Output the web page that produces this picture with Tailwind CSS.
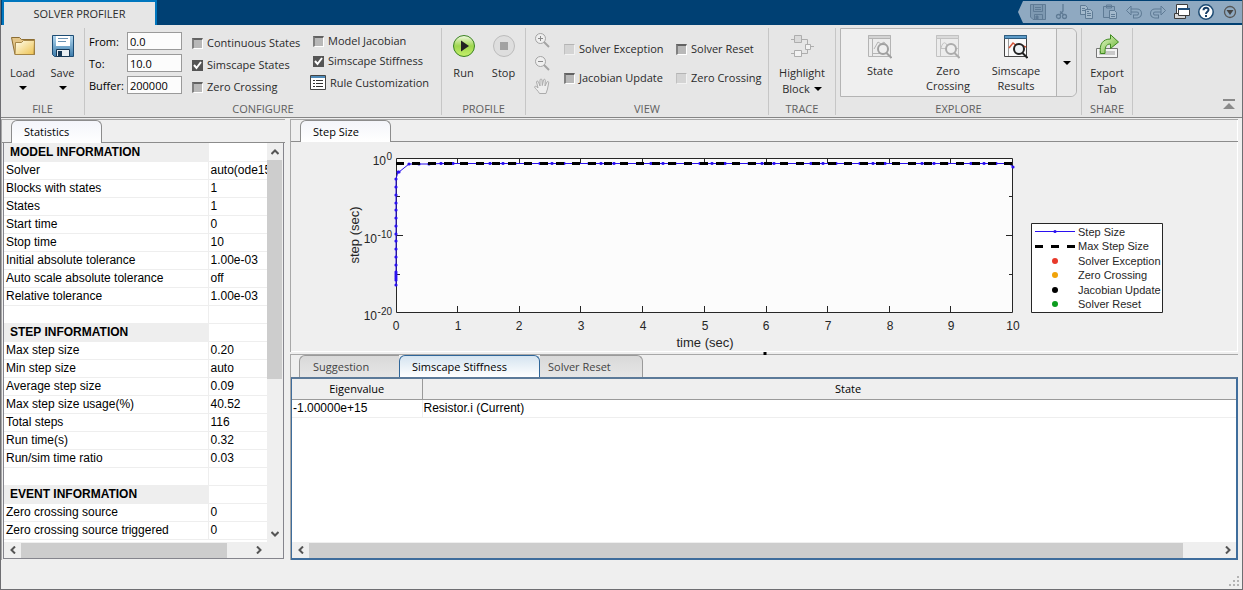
<!DOCTYPE html>
<html lang="en">

<head>
  <meta charset="UTF-8">
  <meta name="viewport" content="width=device-width, initial-scale=1.0">
  <title>Solver Profiler</title>
  <script src="https://cdn.jsdelivr.net/npm/@tailwindcss/browser@4"></script>
</head>

<body class="h-screen overflow-hidden flex flex-col bg-[#efefef] border-x border-b border-[#6e6e72] font-['Open_Sans',sans-serif] text-[11px] leading-4 text-[#2b2b2b]">

  <!-- Title bar -->
  <header class="flex-none h-[25px] flex justify-between bg-[#004073]">
    <h1 class="w-[155px] h-[25px] ml-px pt-1 text-center bg-[#e6e6e6] border-t-2 border-x-2 border-[#0076be]">SOLVER PROFILER</h1>

    <!-- Quick access -->
    <nav class="h-[22px] mt-px w-[224px] pl-3 flex items-center gap-2 bg-[#8fa9c1] [clip-path:polygon(5px_0,100%_0,100%_100%,5px_100%,0_50%)]">
      <button class="w-4" aria-label="Save"><svg viewBox="0 0 16 16" fill="none" stroke="#5f7b95"><path fill="#7e99b1" d="M.5.5h15v15H3L.5 13z"/><path d="M3.500.5h9v7h-9zM5 3.500h6M5 5.500h6M4.500 15.500v-5h8v5"/><path fill="#5f7b95" d="M6 12h2v3H6z"/></svg></button>
      <button class="w-4" aria-label="Cut"><svg viewBox="0 0 16 16" fill="none" stroke="#5f7b95" stroke-width="1.300"><path d="M9 0v7L5.500 11M6 7.500l4 3.500"/><circle cx="4.500" cy="12.500" r="2"/><circle cx="10.500" cy="12.500" r="2"/></svg></button>
      <button class="w-4" aria-label="Copy"><svg viewBox="0 0 16 16" fill="#a3b9cc" stroke="#5f7b95"><path d="M2.500 1.500h5l2 2v7h-7zM4 4.500h3M4 6.500h4"/><path d="M7.500 5.500h5l2 2v7h-7zM9 9.500h4M9 11.500h4M9 7.500h2"/></svg></button>
      <button class="w-4" aria-label="Paste"><svg viewBox="0 0 16 16" fill="#8ba5bd" stroke="#5f7b95"><path d="M1.500 2.500h11v11h-11zM4.500 1h5v3h-5z"/><path fill="#a3b9cc" d="M7.500 6.500h5l2 2v6h-7zM9 10.500h4M9 12.500h4"/></svg></button>
      <button class="w-4" aria-label="Undo"><svg viewBox="0 0 16 16" fill="none"><path stroke="#5f7b95" stroke-width="4" d="M4 6.500h7a3 3 0 0 1 0 6H7"/><path stroke="#91abc2" stroke-width="2" d="M4 6.500h7a3 3 0 0 1 0 6H8"/><path fill="#91abc2" stroke="#5f7b95" d="M5 2v9L.5 6.500z"/></svg></button>
      <button class="w-4" aria-label="Redo"><svg viewBox="0 0 16 16" fill="none"><path stroke="#5f7b95" stroke-width="4" d="M12 6.500H5a3 3 0 0 0 0 6h4"/><path stroke="#91abc2" stroke-width="2" d="M12 6.500H5a3 3 0 0 0 0 6h3"/><path fill="#91abc2" stroke="#5f7b95" d="M11 2v9l4.500-4.500z"/></svg></button>
      <button class="w-4" aria-label="Windows"><svg viewBox="0 0 16 16" fill="#fff" stroke="#3c3c3c"><path d="M2.500.5h11v9h-11z"/><path fill="#d8d8d8" d="M.5 9.500h11v5H.5z"/><path d="M4.500 4.500h11v7h-11z"/><path stroke="#1f4c78" stroke-width="2" d="M4 5h12"/></svg></button>
      <button class="w-4" aria-label="Help"><svg viewBox="0 0 16 16"><circle cx="8" cy="8" r="7.200" fill="#fdfdfd" stroke="#1c4a73" stroke-width="1.500"/><path fill="none" stroke="#163d66" stroke-width="2" d="M5.500 6.300C5.500 3 10.700 3 10.500 6 10.300 7.800 8 7.800 8 10"/><path fill="#163d66" d="M7 11h2v2H7z"/></svg></button>
      <button class="w-4" aria-label="More"><svg viewBox="0 0 16 16"><circle cx="8" cy="8" r="5.500" fill="none" stroke="#555" stroke-width="1.300"/><path fill="#444" d="M4.500 6h7L8 11z"/></svg></button>
    </nav>
  </header>

  <!-- Ribbon -->
  <div class="flex-none flex h-[93px] pt-[3px] bg-[#e6e6e6] border-b border-[#858585]">
    <section class="w-[84px] h-[87px] flex flex-col justify-between border-r border-[#c6c6c6]">
      <div class="flex justify-center gap-3 pt-1.5">
        <button class="flex flex-col items-center w-7">
          <svg class="w-6 h-6" viewBox="0 0 24 24"><defs><linearGradient id="fold" x1="0" y1="0" x2="1" y2="1"><stop offset="0" stop-color="#fffef0"/><stop offset="1" stop-color="#eec24e"/></linearGradient></defs><path fill="#e4c689" stroke="#8c6d32" d="M.5 3.500h8l2 2h13v15H4z"/><path fill="url(#fold)" stroke="#a58546" d="M4.500 8.500h6l2-2h11l-.5 14H4z"/></svg>
          <span class="mt-[7px]">Load</span>
          <svg class="mt-[5px] w-2 h-1" viewBox="0 0 8 4"><path d="M0 0h8L4 4z"/></svg>
        </button>
        <button class="flex flex-col items-center w-7">
          <svg class="w-6 h-6" viewBox="0 0 24 24"><defs><linearGradient id="disk" x1="0" y1="0" x2="0" y2="1"><stop offset="0" stop-color="#b4d8ef"/><stop offset="1" stop-color="#3c7cab"/></linearGradient></defs><path fill="url(#disk)" stroke="#1d4c74" d="M1.500 1.500h21v21h-19l-2-2z"/><path fill="#fff" d="M5 2h14v10H5z"/><path stroke="#6b92b2" d="M7 4.500h10M7 7.500h8"/><path fill="#e9eef2" stroke="#173754" d="M5.500 15.500h13v7h-13z"/><path fill="#173754" d="M7 17h4v5H7z"/></svg>
          <span class="mt-[7px]">Save</span>
          <svg class="mt-[5px] w-2 h-1" viewBox="0 0 8 4"><path d="M0 0h8L4 4z"/></svg>
        </button>
      </div>
      <h2 class="text-center text-[#606060] leading-3">FILE</h2>
    </section>

    <section class="w-[357px] h-[87px] flex flex-col justify-between border-r border-[#c6c6c6]">
      <div class="flex pl-1 pt-1">
        <div class="w-[103px] flex flex-col gap-1 text-black">
          <div class="flex items-center h-[18px]"><label for="from" class="w-[38px] pt-0.5">From:</label><input id="from" value="0.0" class="w-[55px] h-[18px] px-0.5 bg-[#fcfcfc] border border-[#9a9a9a]"></div>
          <div class="flex items-center h-[18px]"><label for="to" class="w-[38px] pt-0.5">To:</label><input id="to" value="10.0" class="w-[55px] h-[18px] px-0.5 bg-[#fcfcfc] border border-[#9a9a9a]"></div>
          <div class="flex items-center h-[18px]"><label for="buffer" class="w-[38px] pt-0.5">Buffer:</label><input id="buffer" value="200000" class="w-[55px] h-[18px] px-0.5 bg-[#fcfcfc] border border-[#9a9a9a]"></div>
        </div>
        <div class="w-[121px] flex flex-col gap-1.5 pt-[3px]">
          <label class="flex items-center gap-1 whitespace-nowrap"><input type="checkbox" class="appearance-none size-[11px] bg-[#b8b8b8] border-t-2 border-l-2 border-b border-r border-t-[#626262] border-l-[#808080] border-b-white border-r-white">Continuous States</label>
          <label class="flex items-center gap-1 whitespace-nowrap"><span class="relative size-[11px]"><input type="checkbox" checked class="block appearance-none size-[11px] bg-[#555]"><svg class="absolute inset-0" viewBox="0 0 11 11" fill="none" stroke="#fff" stroke-width="2"><path d="M2 5l2.500 3L9 2"/></svg></span>Simscape States</label>
          <label class="flex items-center gap-1 whitespace-nowrap"><input type="checkbox" class="appearance-none size-[11px] bg-[#b8b8b8] border-t-2 border-l-2 border-b border-r border-t-[#626262] border-l-[#808080] border-b-white border-r-white">Zero Crossing</label>
        </div>
        <div class="flex flex-col gap-1 pt-px">
          <label class="flex items-center gap-1 whitespace-nowrap"><input type="checkbox" class="appearance-none size-[11px] bg-[#b8b8b8] border-t-2 border-l-2 border-b border-r border-t-[#626262] border-l-[#808080] border-b-white border-r-white">Model Jacobian</label>
          <label class="flex items-center gap-1 whitespace-nowrap"><span class="relative size-[11px]"><input type="checkbox" checked class="block appearance-none size-[11px] bg-[#555]"><svg class="absolute inset-0" viewBox="0 0 11 11" fill="none" stroke="#fff" stroke-width="2"><path d="M2 5l2.500 3L9 2"/></svg></span>Simscape Stiffness</label>
          <button class="flex items-center gap-1 -ml-[3px] mt-0.5 whitespace-nowrap"><svg class="w-4 h-4" viewBox="0 0 16 16"><path fill="#fff" stroke="#444" d="M.5.5h15v14H.5z"/><path stroke="#4f8ab8" stroke-width="2" d="M1 2h14"/><path stroke="#333" d="M3 5.500h2M6 5.500h7M3 8.500h2M6 8.500h7M3 11.500h2M6 11.500h7"/></svg>Rule Customization</button>
        </div>
      </div>
      <h2 class="text-center text-[#606060] leading-3">CONFIGURE</h2>
    </section>

    <section class="w-[84px] h-[87px] flex flex-col justify-between border-r border-[#c6c6c6]">
      <div class="flex justify-center gap-3 pt-1.5">
        <button class="flex flex-col items-center w-7">
          <svg class="w-6 h-6" viewBox="0 0 24 24"><defs><linearGradient id="run" x1="0" y1="0" x2="0" y2="1"><stop offset="0" stop-color="#f2fae4"/><stop offset=".5" stop-color="#9fd64f"/><stop offset="1" stop-color="#c6f06b"/></linearGradient></defs><circle cx="12" cy="12" r="10.500" fill="url(#run)" stroke="#3a8222"/><path fill="#222" d="M9 6.500l8 5.500-8 5.500z"/></svg>
          <span class="mt-[7px]">Run</span>
        </button>
        <button class="flex flex-col items-center w-7">
          <svg class="w-6 h-6" viewBox="0 0 24 24"><circle cx="12" cy="12" r="10.500" fill="#dedede" stroke="#bcbcbc"/><path fill="#a2a2a2" d="M8 8h8v8H8z"/></svg>
          <span class="mt-[7px]">Stop</span>
        </button>
      </div>
      <h2 class="text-center text-[#606060] leading-3">PROFILE</h2>
    </section>

    <section class="w-[243px] h-[87px] flex flex-col justify-between border-r border-[#c6c6c6]">
      <div class="flex pl-2 pt-1">
        <div class="w-[30px] flex flex-col gap-[7px]">
          <button class="w-4" aria-label="Zoom in"><svg viewBox="0 0 16 16" fill="none" stroke="#a4a4a4"><circle cx="6.500" cy="6.500" r="5" fill="#efefef"/><path stroke="#8a8a8a" d="M4 6.500h5M6.500 4v5"/><path stroke-width="2" d="M10 10l5 5"/></svg></button>
          <button class="w-4" aria-label="Zoom out"><svg viewBox="0 0 16 16" fill="none" stroke="#a4a4a4"><circle cx="6.500" cy="6.500" r="5" fill="#efefef"/><path stroke="#8a8a8a" d="M4 6.500h5"/><path stroke-width="2" d="M10 10l5 5"/></svg></button>
          <button class="w-4" aria-label="Pan"><svg viewBox="0 0 16 16" fill="#ededed" stroke="#ababab" stroke-linejoin="round"><path d="M5.500 15.500C4 12.500 1 10.500.5 9c.3-1.300 2-.8 3.500 1L2.500 4c.2-1.300 1.500-1.200 2 0L6 8V2c.2-1.300 1.800-1.300 2 0l.3 5.500L9.500 2c.4-1.200 1.900-.8 1.800.4L11 8l2-4c.6-1 2-.5 1.700.8L13.500 11l-1.500 4.500z"/></svg></button>
        </div>
        <div class="w-[112px] flex flex-col gap-[13px] pt-[9px]">
          <label class="flex items-center gap-1 whitespace-nowrap"><input type="checkbox" disabled class="appearance-none size-[11px] bg-[#d4d4d4] border border-t-[#b4b4b4] border-l-[#c0c0c0] border-b-[#f2f2f2] border-r-[#f2f2f2]">Solver Exception</label>
          <label class="flex items-center gap-1 whitespace-nowrap"><input type="checkbox" class="appearance-none size-[11px] bg-[#b8b8b8] border-t-2 border-l-2 border-b border-r border-t-[#626262] border-l-[#808080] border-b-white border-r-white">Jacobian Update</label>
        </div>
        <div class="flex flex-col gap-[13px] pt-[9px]">
          <label class="flex items-center gap-1 whitespace-nowrap"><input type="checkbox" class="appearance-none size-[11px] bg-[#b8b8b8] border-t-2 border-l-2 border-b border-r border-t-[#626262] border-l-[#808080] border-b-white border-r-white">Solver Reset</label>
          <label class="flex items-center gap-1 whitespace-nowrap"><input type="checkbox" disabled class="appearance-none size-[11px] bg-[#d4d4d4] border border-t-[#b4b4b4] border-l-[#c0c0c0] border-b-[#f2f2f2] border-r-[#f2f2f2]">Zero Crossing</label>
        </div>
      </div>
      <h2 class="text-center text-[#606060] leading-3">VIEW</h2>
    </section>

    <section class="w-[67px] h-[87px] flex flex-col justify-between border-r border-[#c6c6c6]">
      <button class="flex flex-col items-center pt-1.5">
        <svg class="w-6 h-6" viewBox="0 0 24 24" fill="#f2f2f2" stroke="#adadad"><path fill="none" d="M1 5.500h16.500v14H1M17.500 12.500H24"/><path fill="#dadada" d="M4.500 1.500h7v7h-7z"/><path d="M4.500 16.500h7v6h-7zM15.500 10.500h5v5h-5z"/></svg>
        <span class="mt-[7px]">Highlight</span>
        <span class="flex items-center gap-1">Block<svg class="w-2 h-1" viewBox="0 0 8 4"><path d="M0 0h8L4 4z"/></svg></span>
      </button>
      <h2 class="text-center text-[#606060] leading-3">TRACE</h2>
    </section>

    <section class="w-[246px] h-[87px] flex flex-col justify-between border-r border-[#c6c6c6]">
      <div class="flex w-[237px] h-[69px] ml-1 pl-[5px] bg-[#efefef] border border-[#b4b4b4] rounded-r-md leading-[15px]">
        <button class="w-[68px] flex flex-col items-center pt-1.5">
          <svg class="w-6 h-6 flex-none" viewBox="0 0 24 24" fill="none" stroke="#b4b4b4"><path fill="#ececec" d="M.5.5h22v21H.5z"/><path fill="#d4d4d4" d="M.5.5h22v3H.5z"/><path d="M4.500 4v17M4 18.500h14M6 14l4-7 3 2 3-2 3 4"/><circle cx="15" cy="14" r="5" fill="#efefef" stroke="#a0a0a0" stroke-width="2"/><path stroke="#a0a0a0" stroke-width="2" d="M18.500 18l5 5"/></svg>
          <span class="mt-1">State</span>
        </button>
        <button class="w-[68px] flex flex-col items-center pt-1.5">
          <svg class="w-6 h-6 flex-none" viewBox="0 0 24 24" fill="none" stroke="#c2c2c2"><path fill="#ececec" d="M.5.5h22v21H.5z"/><path fill="#dadada" d="M.5.5h22v3H.5z"/><path d="M4.500 4v17M4 13.500h18M5 13c2-7 5-7 7 0s5 6 8 0"/><circle cx="15" cy="14" r="5" fill="#efefef" stroke="#acacac" stroke-width="2"/><path stroke="#acacac" stroke-width="2" d="M18.500 18l5 5"/></svg>
          <span class="mt-1">Zero<br>Crossing</span>
        </button>
        <button class="w-[68px] flex flex-col items-center pt-1.5">
          <svg class="w-6 h-6 flex-none" viewBox="0 0 24 24" fill="none" stroke="#444"><path fill="#fafafa" d="M.5.5h22v21H.5z"/><path fill="#5d9bc8" stroke="#2f5d80" d="M.5.5h22v3H.5z"/><path stroke="#999" d="M4.500 4v17"/><path stroke="#d5563a" stroke-width="1.500" d="M5 13l4-5 4 3 3-1 6 2"/><circle cx="15" cy="14" r="5" fill="#eef2f5" stroke="#222" stroke-width="2"/><path stroke="#222" stroke-width="2" d="M18.500 18l5 5"/></svg>
          <span class="mt-1">Simscape<br>Results</span>
        </button>
        <button class="ml-auto w-5 flex items-center justify-center border-l border-[#b4b4b4] bg-[#e9e9e9] rounded-r-md" aria-label="More plots"><svg class="w-2 h-1" viewBox="0 0 8 4"><path d="M0 0h8L4 4z"/></svg></button>
      </div>
      <h2 class="text-center text-[#606060] leading-3">EXPLORE</h2>
    </section>

    <section class="w-[51px] h-[87px] flex flex-col justify-between border-r border-[#c6c6c6]">
      <button class="flex flex-col items-center pt-1.5">
        <svg class="w-6 h-6" viewBox="0 0 24 24"><defs><linearGradient id="exp" x1="0" y1="0" x2="1" y2="1"><stop offset="0" stop-color="#eafad0"/><stop offset="1" stop-color="#63b22c"/></linearGradient></defs><path fill="#f4f4f4" stroke="#777" d="M1.500 14.500h21v9h-21z"/><path fill="#c9c9c9" d="M4 17h16v4H4z"/><path fill="url(#exp)" stroke="#3f8a20" d="M5.500 19.500C4 10 8 5 15.500 5V.7L23.500 8l-8 6.500V10c-5 0-5.500 4-5.500 9.500z"/></svg>
        <span class="mt-[7px]">Export</span>
        <span>Tab</span>
      </button>
      <h2 class="text-center text-[#606060] leading-3">SHARE</h2>
    </section>

    <button class="ml-auto mr-[7px] mb-[7px] self-end w-3" aria-label="Collapse ribbon"><svg viewBox="0 0 12 11" fill="#8a8a8a"><path d="M0 0h12v2H0zM6 4l6 6H0z"/></svg></button>
  </div>

  <!-- Workspace -->
  <main class="flex-1 min-h-0 flex gap-[5px] pt-px pr-1 pb-px">

    <!-- Statistics -->
    <aside class="flex-none w-[284px] flex flex-col border-l border-t border-[#a8a8a8]">
      <div class="flex h-[23px] pl-[9px] border-b border-[#8c8c8c]">
        <button class="w-[91px] h-[23px] pl-3 text-left bg-linear-to-b from-[#f4f5fa] to-white border border-b-0 border-[#8c8c8c] rounded-t-md text-black">Statistics</button>
      </div>
      <div class="flex-1 min-h-0 flex flex-col mx-px mb-px border border-t-0 border-[#85858d] font-['Liberation_Sans',sans-serif] text-[12px] text-black">
        <div class="flex-1 min-h-0 flex">
          <div class="flex-1 overflow-hidden bg-white">
            <table class="w-full table-fixed border-collapse whitespace-nowrap [&_td]:border-b [&_td]:border-[#eee] [&_th]:border-b [&_th]:border-[#eee] [&_td]:h-[18px] [&_th]:h-[18px] [&_td]:leading-4 [&_th]:leading-4 [&_td]:overflow-hidden [&_td]:pl-0.5 [&_th]:pl-1.5 [&_th]:text-left [&_th]:bg-[#eee]">
              <colgroup><col class="w-[204px]"><col></colgroup>
              <tbody class="[&_td:last-child]:border-l">
                <tr><th>MODEL INFORMATION</th><td></td></tr>
                <tr><td>Solver</td><td>auto(ode15s)</td></tr>
                <tr><td>Blocks with states</td><td>1</td></tr>
                <tr><td>States</td><td>1</td></tr>
                <tr><td>Start time</td><td>0</td></tr>
                <tr><td>Stop time</td><td>10</td></tr>
                <tr><td>Initial absolute tolerance</td><td>1.00e-03</td></tr>
                <tr><td>Auto scale absolute tolerance</td><td>off</td></tr>
                <tr><td>Relative tolerance</td><td>1.00e-03</td></tr>
                <tr><td></td><td></td></tr>
                <tr><th>STEP INFORMATION</th><td></td></tr>
                <tr><td>Max step size</td><td>0.20</td></tr>
                <tr><td>Min step size</td><td>auto</td></tr>
                <tr><td>Average step size</td><td>0.09</td></tr>
                <tr><td>Max step size usage(%)</td><td>40.52</td></tr>
                <tr><td>Total steps</td><td>116</td></tr>
                <tr><td>Run time(s)</td><td>0.32</td></tr>
                <tr><td>Run/sim time ratio</td><td>0.03</td></tr>
                <tr><td></td><td></td></tr>
                <tr><th>EVENT INFORMATION</th><td></td></tr>
                <tr><td>Zero crossing source</td><td>0</td></tr>
                <tr><td>Zero crossing source triggered</td><td>0</td></tr>
              </tbody>
            </table>
          </div>
          <div class="w-4 flex flex-col items-center">
            <button class="h-[17px]" aria-label="Scroll up"><svg class="w-2 h-[6px]" viewBox="0 0 8 6" fill="none" stroke="#555" stroke-width="2"><path d="M.5 5L4 1.500 7.500 5"/></svg></button>
            <div class="w-full flex-1"><div class="w-[15px] h-[60%] bg-[#cdcdcd]"></div></div>
            <button class="h-[17px]" aria-label="Scroll down"><svg class="w-2 h-[6px]" viewBox="0 0 8 6" fill="none" stroke="#555" stroke-width="2"><path d="M.5 1L4 4.500 7.500 1"/></svg></button>
          </div>
        </div>
        <div class="flex-none h-4 flex items-center pr-4">
          <button class="w-[17px] flex justify-center" aria-label="Scroll left"><svg class="w-[6px] h-2" viewBox="0 0 6 8" fill="none" stroke="#555" stroke-width="2"><path d="M5 .5L1.500 4 5 7.500"/></svg></button>
          <div class="flex-1"><div class="w-[90%] h-[15px] bg-[#cdcdcd]"></div></div>
          <button class="w-[17px] flex justify-center" aria-label="Scroll right"><svg class="w-[6px] h-2" viewBox="0 0 6 8" fill="none" stroke="#555" stroke-width="2"><path d="M1 .5L4.500 4 1 7.500"/></svg></button>
        </div>
      </div>
    </aside>

    <div class="flex-1 min-w-0 flex flex-col">
      <!-- Step size plot -->
      <section class="relative flex-none border-l border-t border-[#a8a8a8] shadow-[inset_-1px_-1px_#fff]">
        <div class="flex h-[22px] pl-[9px] border-b border-[#8c8c8c]">
          <button class="w-[91px] h-[22px] pl-3 text-left bg-linear-to-b from-[#f4f5fa] to-white border border-b-0 border-[#8c8c8c] rounded-t-md text-black">Step Size</button>
        </div>
        <svg class="block w-full h-auto font-['Liberation_Sans',sans-serif]" viewBox="0 0 947 210" fill="#262626">
          <defs>
            <marker id="dot" markerUnits="userSpaceOnUse" markerWidth="4" markerHeight="4" refX="2" refY="2"><circle cx="2" cy="2" r="1.600" fill="#2a10f0"/></marker>
          </defs>
          <path fill="#fcfcfc" stroke="#262626" d="M105.500 16.500h616v154h-616z"/>
          <path fill="none" stroke="#262626" d="M166.500 170v-6M228.500 170v-6M289.500 170v-6M351.500 170v-6M413.500 170v-6M475.500 170v-6M536.500 170v-6M598.500 170v-6M659.500 170v-6M166.500 17v5M228.500 17v5M289.500 17v5M351.500 17v5M413.500 17v5M475.500 17v5M536.500 17v5M598.500 17v5M659.500 17v5M106 93.500h6M106 54.500h3M106 132.500h3M721 93.500h-6M721 54.500h-3M721 132.500h-3"/>
          <polyline fill="none" stroke="#2a10f0" marker-start="url(#dot)" marker-mid="url(#dot)" marker-end="url(#dot)"
            points="105,143 105,138 105,136 105,134 105,132 105,130 105,123 105,115 105,107 105,99 105,92 105,84 105,76 105,68 105,61 105,53 105,45 105,37 107,30 108,30 118,22 128,22 138,22 150,21.500 162,21.500 175,21.500 187,21.500 199,21.500 212,21.500 224,21.500 236,21.500 249,21.500 261,21.500 273,21.500 286,21.500 298,21.500 310,21.500 323,21.500 335,21.500 347,21.500 360,21.500 372,21.500 384,21.500 397,21.500 409,21.500 421,21.500 434,21.500 446,21.500 458,21.500 471,21.500 483,21.500 495,21.500 508,21.500 520,21.500 532,21.500 545,21.500 557,21.500 569,21.500 582,21.500 594,21.500 606,21.500 619,21.500 631,21.500 643,21.500 656,21.500 668,21.500 680,21.500 693,21.500 705,21.500 718,21.500 722,25"/>
          <path stroke="#000" stroke-width="3" stroke-dasharray="8 8" d="M105 21.500h616"/>
          <g font-size="12" text-anchor="middle">
            <text x="105" y="188">0</text><text x="167" y="188">1</text><text x="228" y="188">2</text><text x="290" y="188">3</text><text x="352" y="188">4</text><text x="414" y="188">5</text><text x="475" y="188">6</text><text x="537" y="188">7</text><text x="599" y="188">8</text><text x="660" y="188">9</text><text x="722" y="188">10</text>
          </g>
          <g font-size="12" text-anchor="end">
            <text x="95" y="23">10</text><text x="86" y="101">10</text><text x="86" y="178">10</text>
            <g font-size="10"><text x="101" y="18">0</text><text x="101" y="96">-10</text><text x="101" y="173">-20</text></g>
          </g>
          <text font-size="13" text-anchor="middle" x="414" y="205">time (sec)</text>
          <text font-size="13" text-anchor="middle" transform="translate(68 93) rotate(-90)">step (sec)</text>
          <g font-size="11">
            <path fill="#fff" stroke="#262626" d="M740.500 81.500h131v89h-131z"/>
            <path stroke="#2a10f0" d="M744 89.500h40"/><circle cx="764" cy="89.500" r="1.600" fill="#2a10f0"/>
            <path stroke="#000" stroke-width="3" stroke-dasharray="8 8" d="M744 104.500h40"/>
            <circle cx="764" cy="119" r="3" fill="#e8392a"/><circle cx="764" cy="133" r="3" fill="#f0a30a"/><circle cx="764" cy="148" r="3" fill="#000"/><circle cx="764" cy="162" r="3" fill="#0c9c1e"/>
            <text x="787" y="94">Step Size</text><text x="787" y="108">Max Step Size</text><text x="787" y="123">Solver Exception</text><text x="787" y="137">Zero Crossing</text><text x="787" y="152">Jacobian Update</text><text x="787" y="166">Solver Reset</text>
          </g>
        </svg>
        <span class="absolute left-1/2 -translate-x-1/2 -bottom-[3px] size-[3px] bg-black"></span>
      </section>

      <!-- Results -->
      <section class="flex-1 min-h-0 mt-0.5 flex flex-col border-l border-t border-[#a8a8a8]">
        <div class="flex h-[22px] pl-2">
          <button class="w-[100px] pl-[13px] text-left bg-linear-to-b from-[#d9d9d9] to-[#e6e6e6] border border-b-0 border-r-0 border-[#9a9a9a] rounded-tl-md text-[#444]">Suggestion</button>
          <button class="w-[141px] pl-3 text-left bg-linear-to-b from-[#d5e4f0] to-white border border-b-0 border-[#2f6699] rounded-t-md text-black">Simscape Stiffness</button>
          <button class="w-[103px] pl-2 text-left bg-linear-to-b from-[#d9d9d9] to-[#e6e6e6] border border-b-0 border-l-0 border-[#9a9a9a] rounded-tr-md text-[#444]">Solver Reset</button>
        </div>
        <div class="flex-1 min-h-0 flex flex-col bg-white border-2 border-l-1 border-[#3f6d9c] border-t-[#5c7a99]">
          <div class="flex-1 min-h-0 overflow-hidden">
            <table class="w-[104%] table-fixed border-collapse text-black">
              <colgroup><col class="w-[130px]"><col></colgroup>
              <thead>
                <tr class="h-5 bg-[#efefef] border-b border-[#9a9a9a]"><th class="font-normal border-r border-[#9a9a9a]">Eigenvalue</th><th class="font-normal">State</th></tr>
              </thead>
              <tbody class="font-['Liberation_Sans',sans-serif] text-[12px]">
                <tr class="h-[18px] border-b border-[#eee]"><td class="pl-px border-r border-[#eee]">-1.00000e+15</td><td class="pl-px">Resistor.i (Current)</td></tr>
              </tbody>
            </table>
          </div>
          <div class="flex-none h-4 flex items-center bg-[#efefef]">
            <button class="w-[17px] flex justify-center" aria-label="Scroll left"><svg class="w-[6px] h-2" viewBox="0 0 6 8" fill="none" stroke="#555" stroke-width="2"><path d="M5 .5L1.500 4 5 7.500"/></svg></button>
            <div class="flex-1"><div class="w-[96%] h-[15px] bg-[#cdcdcd]"></div></div>
            <button class="w-[17px] flex justify-center" aria-label="Scroll right"><svg class="w-[6px] h-2" viewBox="0 0 6 8" fill="none" stroke="#555" stroke-width="2"><path d="M1 .5L4.500 4 1 7.500"/></svg></button>
          </div>
        </div>
      </section>
    </div>
  </main>

  <!-- Status bar -->
  <footer class="flex-none h-7 flex justify-end items-end p-0.5">
    <svg class="w-[11px] h-[11px]" viewBox="0 0 11 11" fill="#b4b4b4"><path d="M8 0h2v2H8zM4 4h2v2H4zM8 4h2v2H8zM0 8h2v2H0zM4 8h2v2H4zM8 8h2v2H8z"/></svg>
  </footer>
</body>

</html>
